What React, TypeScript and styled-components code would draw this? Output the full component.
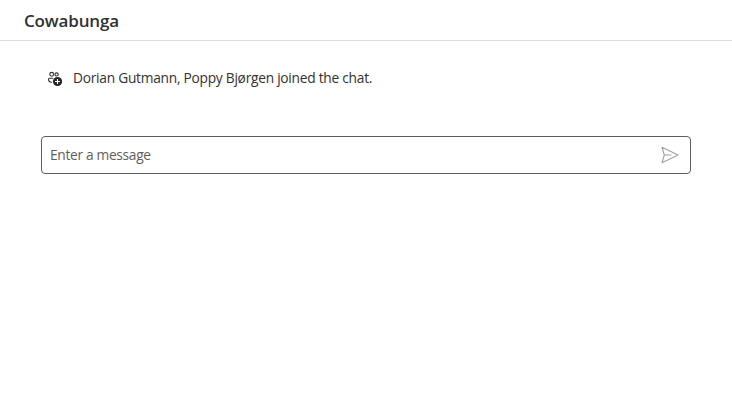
import React from "react";
import styled, { createGlobalStyle } from "styled-components";

const GlobalStyle = createGlobalStyle`
  * { box-sizing: border-box; }
  body { margin: 0; background: #fff; font-family: "Open Sans", "Noto Sans", sans-serif; color: #323130; }
`;

const Page = styled.main`
  display: flex;
  flex-direction: column;
  min-height: 412px;
`;

const Header = styled.header`
  display: flex;
  align-items: center;
  height: 41px;
  padding: 2px 24px 0;
  border-bottom: 1px solid #dcdcdc;
`;

const Title = styled.h1`
  margin: 0;
  font-size: 17px;
  line-height: 24px;
  font-weight: 600;
  letter-spacing: -0.15px;
  white-space: nowrap;
`;

const Thread = styled.section`
  display: flex;
  flex-direction: column;
  padding: 27px 41px 0;
`;

const SystemMessage = styled.div`
  display: flex;
  align-items: center;
  gap: 10px;
  height: 20px;
  padding-left: 6px;
  margin-bottom: 48px;
`;

const MessageText = styled.span`
  font-size: 13.75px;
  line-height: 20px;
  letter-spacing: -0.26px;
  white-space: nowrap;
`;

const SendBox = styled.div`
  display: flex;
  align-items: center;
  justify-content: space-between;
  height: 38px;
  padding: 0 11px 0 8px;
  border: 1px solid #605e5c;
  border-radius: 4px;
`;

const Input = styled.input`
  flex: 1;
  border: 0;
  padding: 0;
  outline: 0;
  background: transparent;
  font: 13.75px/20px "Open Sans", "Noto Sans", sans-serif;
  letter-spacing: -0.32px;
  color: #323130;
  &::placeholder { color: #605e5c; opacity: 1; }
`;

const SendButton = styled.button`
  display: flex;
  padding: 0;
  border: 0;
  background: transparent;
  color: #a19f9d;
`;

const PeopleAddIcon = () => (
  <svg width="16" height="17" viewBox="0 0 16 17" fill="none" stroke="#323130" strokeWidth="1.100">
    <circle cx="4.700" cy="4.300" r="1.900" />
    <circle cx="9.600" cy="4.500" r="1.600" />
    <path d="M6 8.300H2.500C1.700 8.300 1.500 8.700 1.500 9.300C1.500 11.100 2.700 12.300 4.800 12.400M8 8.300h4" />
    <circle cx="10.500" cy="11.500" r="5.100" fill="#fff" stroke="none" />
    <circle cx="10.500" cy="11.500" r="4.600" fill="#252423" stroke="none" />
    <path d="M10.500 9v5M8 11.500h5" stroke="#fff" />
  </svg>
);

const SendIcon = () => (
  <svg width="18" height="18" viewBox="0 0 18 18" fill="none" stroke="currentColor" strokeWidth="1.100" strokeLinejoin="round">
    <path d="M1 1.300L17 9L1 16.700L3.300 9ZM3.300 9H10.500" />
  </svg>
);

export default function App() {
  return (
    <Page>
      <GlobalStyle />
      <Header><Title>Cowabunga</Title></Header>
      <Thread>
        <SystemMessage>
          <PeopleAddIcon />
          <MessageText>Dorian Gutmann, Poppy Bjørgen joined the chat.</MessageText>
        </SystemMessage>
        <SendBox>
          <Input placeholder="Enter a message" aria-label="Enter a message" />
          <SendButton aria-label="Send message"><SendIcon /></SendButton>
        </SendBox>
      </Thread>
    </Page>
  );
}
